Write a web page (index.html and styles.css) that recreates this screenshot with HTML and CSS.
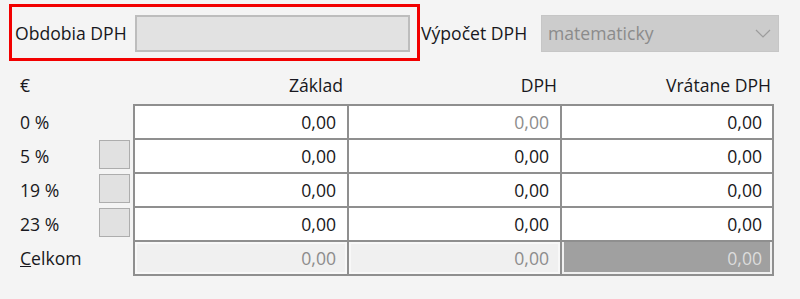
FILE: index.html
```html
<!DOCTYPE html>
<html lang="sk">
<head>
<meta charset="utf-8">
<title>DPH</title>
<link rel="stylesheet" href="styles.css">
</head>
<body>
<div class="form">
  <div class="top">
    <div class="highlight">
      <span class="lbl lbl-period">Obdobia DPH</span>
      <div class="input"></div>
    </div>
    <span class="lbl lbl-calc">Výpočet DPH</span>
    <div class="select">
      <span>matematicky</span>
      <svg class="chev" width="16" height="9" viewBox="0 0 16 9"><path d="M1 1 L8 8 L15 1" fill="none" stroke="#9c9c9c" stroke-width="1.2"/></svg>
    </div>
  </div>

  <div class="head">
    <div class="hcur">€</div>
    <div class="hcell h1">Základ</div>
    <div class="hcell h2">DPH</div>
    <div class="hcell h3">Vrátane DPH</div>
  </div>

  <div class="body">
    <div class="labels">
      <div class="lrow"><span class="rlbl">0 %</span></div>
      <div class="lrow"><span class="rlbl">5 %</span><span class="btn"></span></div>
      <div class="lrow"><span class="rlbl">19 %</span><span class="btn"></span></div>
      <div class="lrow"><span class="rlbl">23 %</span><span class="btn"></span></div>
      <div class="lrow"><span class="rlbl"><u>C</u>elkom</span></div>
    </div>
    <div class="table">
      <div class="cell c1">0,00</div><div class="cell c2 muted">0,00</div><div class="cell c3">0,00</div>
      <div class="cell c1">0,00</div><div class="cell c2">0,00</div><div class="cell c3">0,00</div>
      <div class="cell c1">0,00</div><div class="cell c2">0,00</div><div class="cell c3">0,00</div>
      <div class="cell c1">0,00</div><div class="cell c2">0,00</div><div class="cell c3">0,00</div>
      <div class="cell c1 total">0,00</div><div class="cell c2 total">0,00</div><div class="cell c3 dark">0,00</div>
    </div>
  </div>
</div>
</body>
</html>
```
FILE: styles.css
```css
html, body {
  margin: 0;
  padding: 0;
  background: #f4f4f4;
}
body {
  font-family: "Open Sans", "Noto Sans", sans-serif;
  font-size: 17.6px;
  color: #181820;
  width: 800px;
  height: 299px;
  overflow: hidden;
}
.top {
  display: flex;
  align-items: center;
  padding: 4px 0 0 9px;
}
.highlight {
  box-sizing: border-box;
  width: 411px;
  height: 57px;
  border: 3px solid #f20000;
  display: flex;
  align-items: center;
  padding-left: 3px;
}
.lbl-period {
  width: 120px;
  flex: none;
}
.input {
  box-sizing: border-box;
  width: 275px;
  height: 37px;
  margin-top: 1px;
  background: #e2e2e2;
  border: 2px solid #bdbdbd;
}
.lbl-calc {
  width: 120px;
  margin-left: 1px;
  flex: none;
}
.select {
  box-sizing: border-box;
  width: 238px;
  height: 37px;
  margin-top: 1px;
  background: #cccccc;
  border: 1px solid #c6c6c6;
  display: flex;
  align-items: center;
  justify-content: space-between;
  padding: 0 7px 0 6px;
  color: #8b8b8b;
}
.chev {
  display: block;
}
.head {
  display: flex;
  height: 30px;
  align-items: center;
  margin: 9px 0 4px 20px;
}
.hcur {
  width: 113px;
}
.hcell {
  box-sizing: border-box;
  text-align: right;
}
.h1 { width: 214px; padding-right: 4px; }
.h2 { width: 213px; padding-right: 3px; }
.h3 { width: 214px; padding-right: 3px; }
.body {
  display: flex;
  margin-left: 20px;
}
.labels {
  width: 113px;
  display: grid;
  grid-auto-rows: 32px;
  row-gap: 2px;
  padding-top: 2px;
}
.lrow {
  display: flex;
  align-items: flex-start;
}
.rlbl {
  width: 79px;
  line-height: 32px;
}
.btn {
  box-sizing: border-box;
  width: 31px;
  height: 29px;
  background: #e1e1e1;
  border: 1px solid #adadad;
}
.table {
  display: grid;
  grid-template-columns: 212px 211px 210px;
  grid-auto-rows: 32px;
  gap: 2px;
  padding: 2px;
  background: #8f8f8f;
}
.cell {
  background: #ffffff;
  text-align: right;
  line-height: 32px;
  padding-right: 11px;
}
.c3 { padding-right: 10px; }
.muted { color: #8c8c8c; }
.total {
  background: #f0f0f0;
  box-shadow: inset 0 0 0 2px #f8f8f8;
  color: #8c8c8c;
}
.dark {
  background: #a0a0a0;
  box-shadow: inset 2px 0 0 #f0f0f0, inset -2px -2px 0 #f0f0f0;
  color: #dcdcdc;
}
```
